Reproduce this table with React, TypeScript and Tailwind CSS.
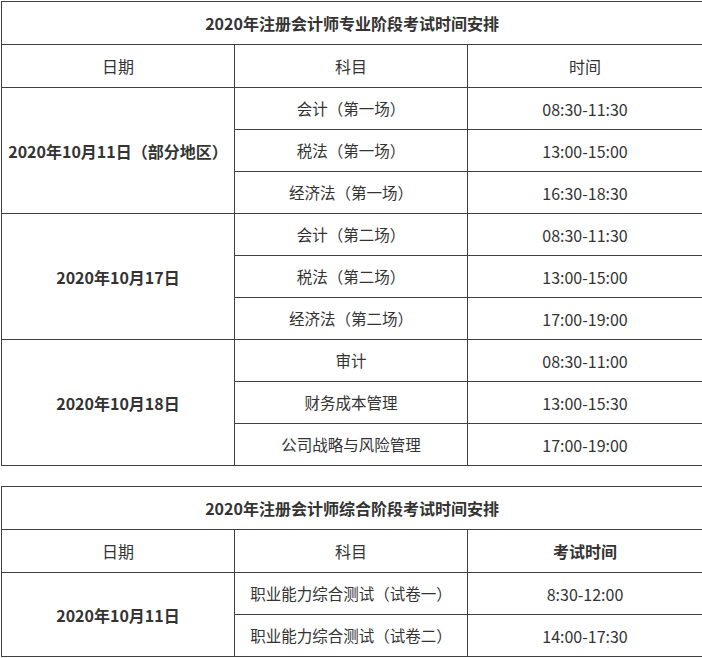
const font = { fontFamily: '"Noto Sans CJK SC", "Liberation Sans", sans-serif' };

type Session = { subject: string; time: string };
type DayGroup = { date: string; sessions: Session[] };

const professional: DayGroup[] = [
  {
    date: "2020年10月11日（部分地区）",
    sessions: [
      { subject: "会计（第一场）", time: "08:30-11:30" },
      { subject: "税法（第一场）", time: "13:00-15:00" },
      { subject: "经济法（第一场）", time: "16:30-18:30" },
    ],
  },
  {
    date: "2020年10月17日",
    sessions: [
      { subject: "会计（第二场）", time: "08:30-11:30" },
      { subject: "税法（第二场）", time: "13:00-15:00" },
      { subject: "经济法（第二场）", time: "17:00-19:00" },
    ],
  },
  {
    date: "2020年10月18日",
    sessions: [
      { subject: "审计", time: "08:30-11:00" },
      { subject: "财务成本管理", time: "13:00-15:30" },
      { subject: "公司战略与风险管理", time: "17:00-19:00" },
    ],
  },
];

const comprehensive: DayGroup[] = [
  {
    date: "2020年10月11日",
    sessions: [
      { subject: "职业能力综合测试（试卷一）", time: "8:30-12:00" },
      { subject: "职业能力综合测试（试卷二）", time: "14:00-17:30" },
    ],
  },
];

const cell = "border border-[#404040] text-center align-middle p-0";

function ScheduleTable({ title, timeLabel, groups }: { title: string; timeLabel: string; groups: DayGroup[] }) {
  return (
    <table className="w-[701px] table-fixed border-collapse text-[#333]" style={font}>
      <colgroup>
        <col className="w-[233px]" />
        <col className="w-[233px]" />
        <col className="w-[235px]" />
      </colgroup>
      <tbody>
        <tr className="h-[43px]">
          <td colSpan={3} className={`${cell} text-[16px] font-bold`}>
            {title}
          </td>
        </tr>
        <tr className="h-[43px] text-[16px]">
          <td className={cell}>日期</td>
          <td className={cell}>科目</td>
          <td className={`${cell} ${timeLabel === "时间" ? "" : "font-bold"}`}>{timeLabel}</td>
        </tr>
        {groups.map((group) =>
          group.sessions.map((s, i) => (
            <tr key={group.date + s.subject} className="h-[42px]">
              {i === 0 ? (
                <td rowSpan={group.sessions.length} className={`${cell} text-[16px] font-bold`}>
                  {group.date}
                </td>
              ) : null}
              <td className={`${cell} text-[15.5px]`}>{s.subject}</td>
              <td className={`${cell} text-[16px]`}>{s.time}</td>
            </tr>
          ))
        )}
      </tbody>
    </table>
  );
}

export default function App() {
  return (
    <div className="flex min-h-[658px] flex-col gap-5 bg-white pl-px pt-px">
      <ScheduleTable title="2020年注册会计师专业阶段考试时间安排" timeLabel="时间" groups={professional} />
      <ScheduleTable title="2020年注册会计师综合阶段考试时间安排" timeLabel="考试时间" groups={comprehensive} />
    </div>
  );
}
